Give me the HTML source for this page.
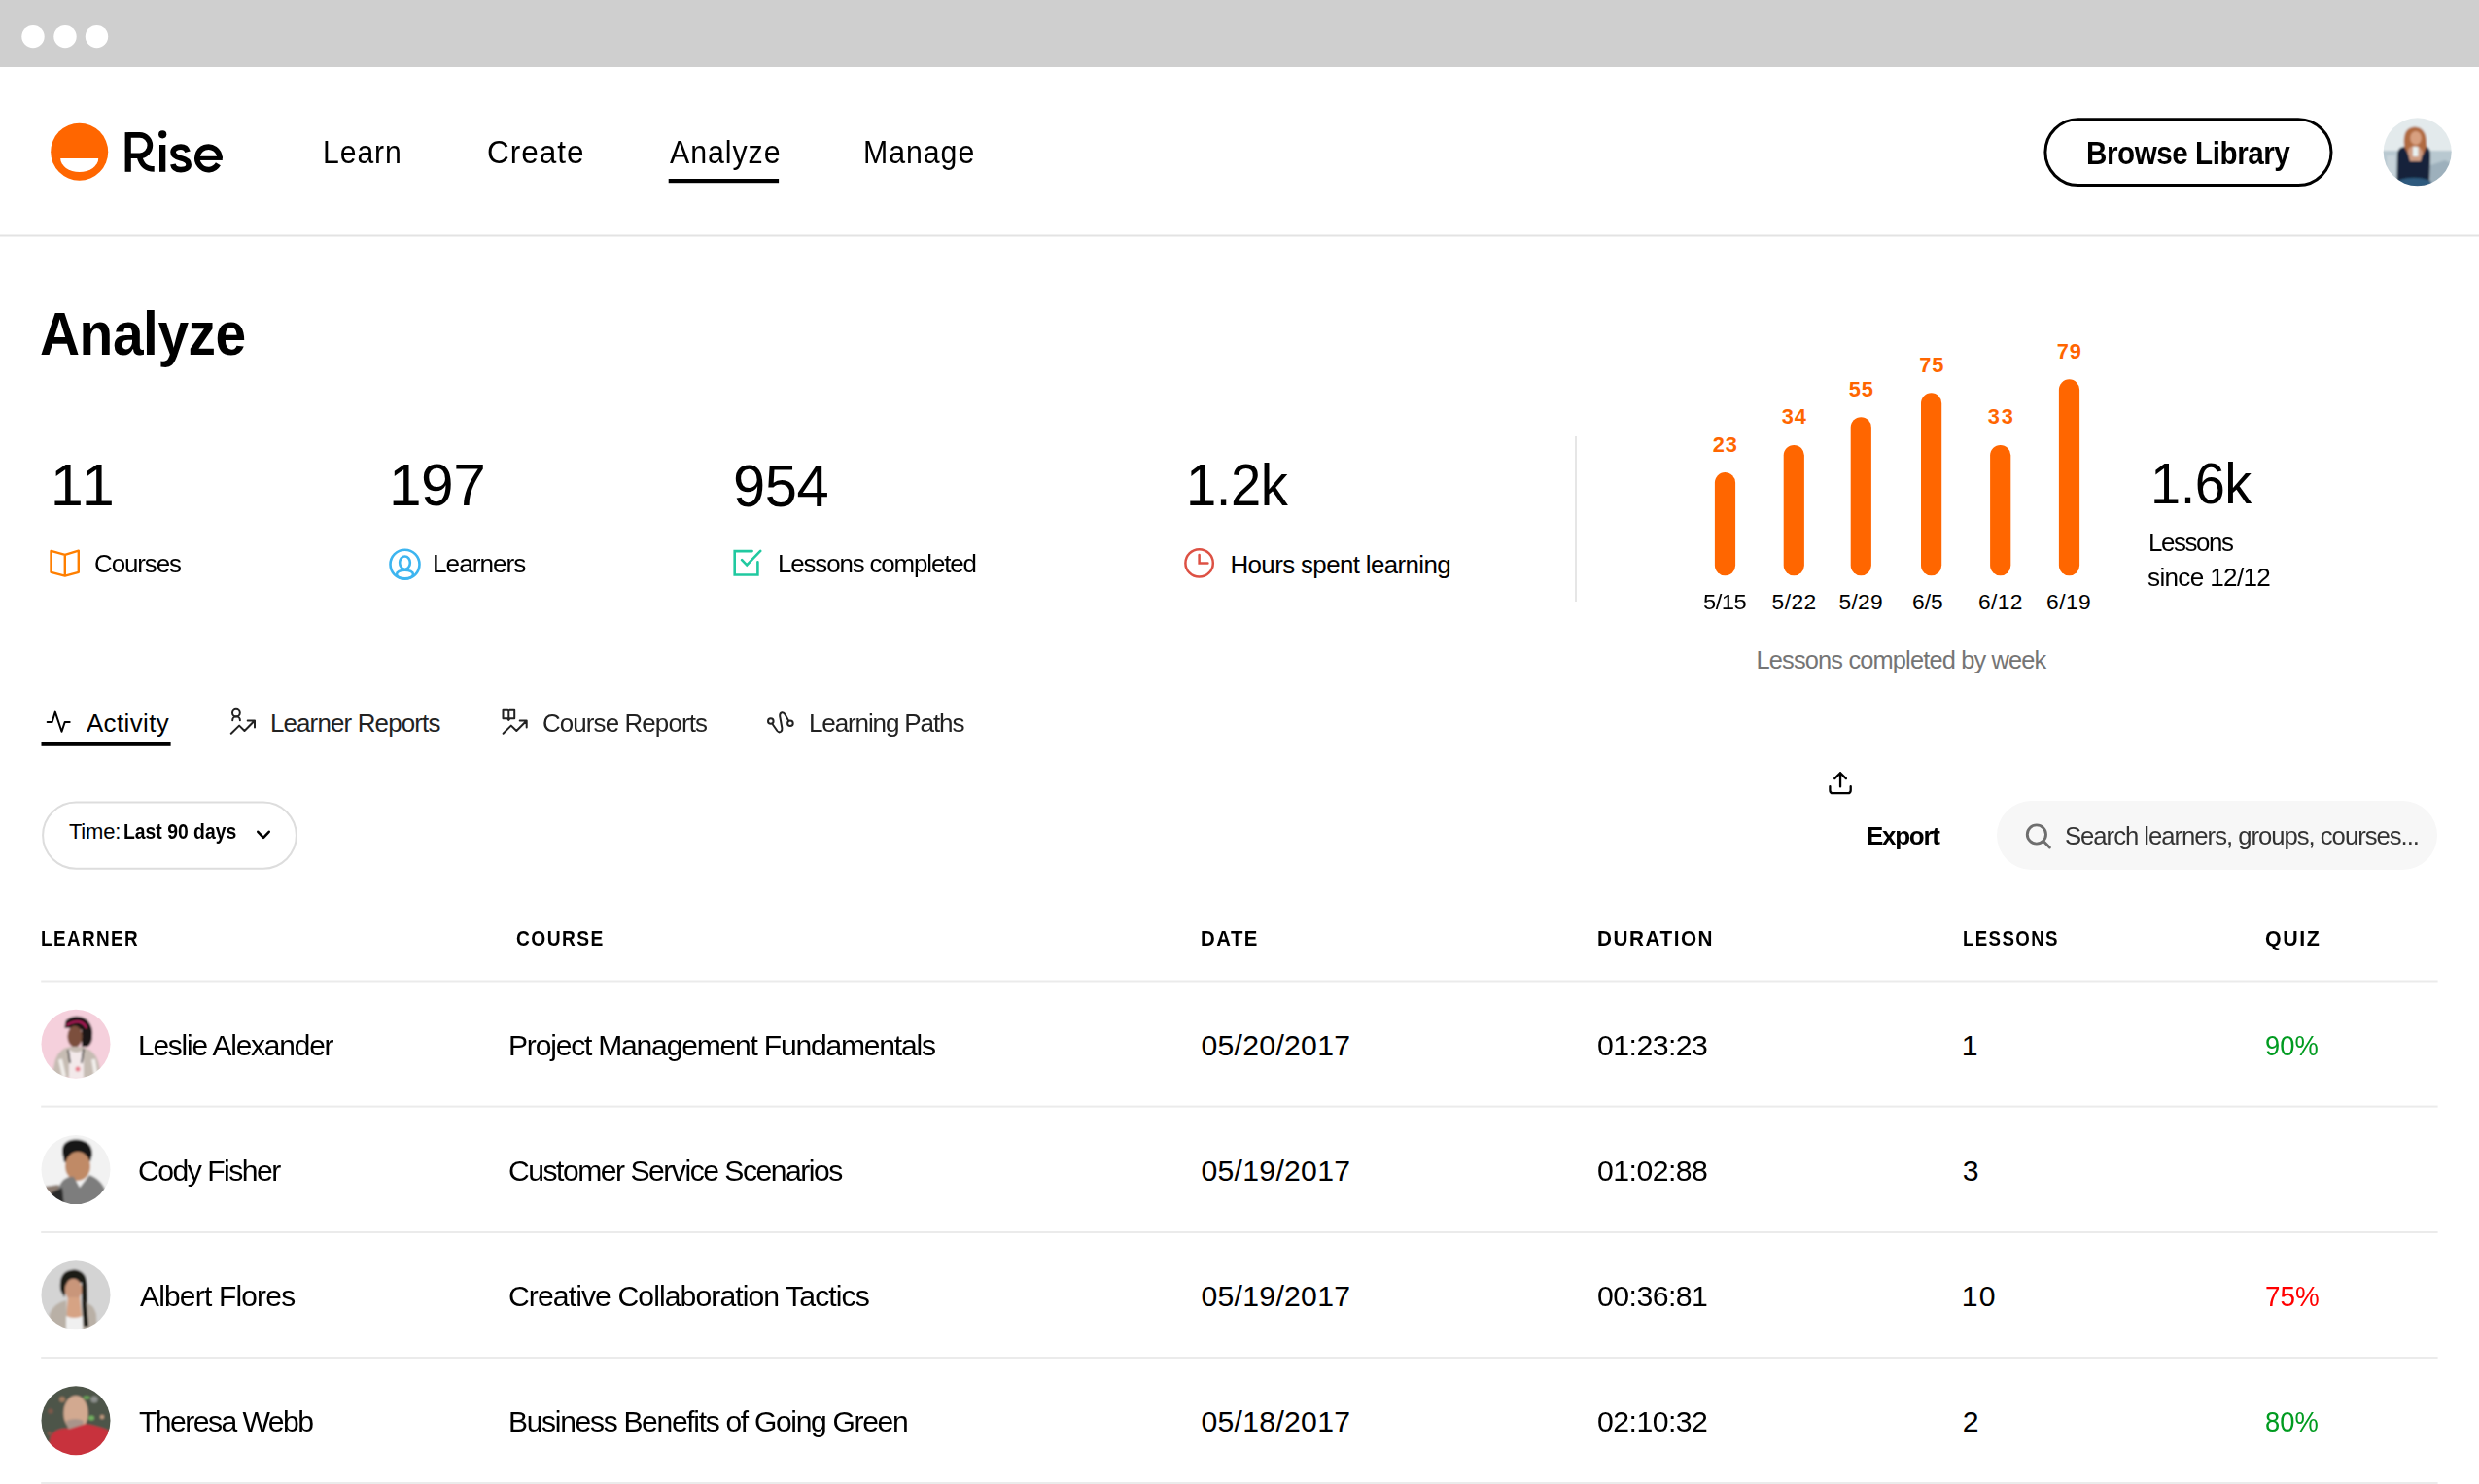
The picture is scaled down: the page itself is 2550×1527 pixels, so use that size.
<!DOCTYPE html>
<html><head><meta charset="utf-8"><title>Rise Analyze</title>
<style>
html,body{margin:0;padding:0;background:#fff;}
body{width:2550px;height:1527px;position:relative;overflow:hidden;font-family:"Liberation Sans",sans-serif;}
.t{position:absolute;white-space:nowrap;line-height:1;margin:0;padding:0;}
.t b{font-weight:700;}
.a{position:absolute;}
</style></head><body>
<svg class="a" style="left:0;top:0" width="2550" height="1527" viewBox="0 0 2550 1527">
<defs>
<filter id="bl" x="-10%" y="-10%" width="120%" height="120%"><feGaussianBlur stdDeviation="0.8"/></filter>
<clipPath id="cA"><circle cx="2486.7" cy="156.3" r="35"/></clipPath>
<clipPath id="c0"><circle cx="78" cy="1074.2" r="35.5"/></clipPath>
<clipPath id="c1"><circle cx="78" cy="1203.6" r="35.5"/></clipPath>
<clipPath id="c2"><circle cx="78" cy="1332.7" r="35.5"/></clipPath>
<clipPath id="c3"><circle cx="78" cy="1461.8" r="35.5"/></clipPath>
</defs>
<!-- browser bar -->
<rect x="0" y="0" width="2550" height="69" fill="#cfcfcf"/>
<circle cx="34" cy="37.6" r="11.7" fill="#fff"/>
<circle cx="67" cy="37.6" r="11.7" fill="#fff"/>
<circle cx="99.5" cy="37.6" r="11.7" fill="#fff"/>
<rect x="0" y="241.5" width="2550" height="2" fill="#e3e3e3"/>
<!-- logo -->
<circle cx="81.7" cy="156.2" r="29.5" fill="#ff6600"/>
<path d="M62.2,163 H101.2 A19.5,14 0 0 1 62.2,163 Z" fill="#fff"/>
<g fill="#000">
 <rect x="128.6" y="136.1" width="6.2" height="40.7"/>
 <rect x="164" y="149" width="6.3" height="27.8"/>
 <circle cx="167.2" cy="138.3" r="4.1"/>
</g>
<g fill="none" stroke="#000" stroke-width="5.7">
 <path d="M131.7,138.95 H143.7 A10.65,10.65 0 0 1 143.7,160.25 H131.7"/>
 <path d="M143.4,160.5 C145.5,170 150,173.95 158.7,173.95"/>
 <path d="M193,156.3 C192,152.5 189,151.1 186,151.1 C181.5,151.1 178.1,153.5 178.1,156.5 C178.1,160.5 182,161.8 186,162.8 C190.5,163.8 194.1,165.5 194.1,169.5 C194.1,173 190.5,174.6 186,174.6 C181.5,174.6 178.5,172.5 177.9,169"/>
 <path d="M226,162.9 A11.55,11.75 0 1 0 224.4,168.8"/>
 <path d="M202.5,162.85 H228.8" stroke-width="4.2"/>
</g>
<!-- nav underline -->
<rect x="687.7" y="184" width="113.4" height="4.2" fill="#000"/>
<!-- browse button -->
<rect x="2103.9" y="122.7" width="294.1" height="67.8" rx="33.9" fill="none" stroke="#000" stroke-width="3"/>
<!-- top avatar -->
<g clip-path="url(#cA)"><g filter="url(#bl)">
 <rect x="2450" y="120" width="75" height="75" fill="#e3eaec"/>
 <rect x="2450" y="155" width="75" height="40" fill="#b8c8d0"/>
 <rect x="2455" y="160" width="9" height="30" fill="#c8d4da"/>
 <path d="M2500,170 L2515,165 L2525,170 V196 H2500 Z" fill="#9db0bc"/>
 <path d="M2473,150 Q2471,131 2484,130.5 Q2496,131 2496,148 L2497,160 L2472,160 Z" fill="#b06a40"/>
 <ellipse cx="2485" cy="142" rx="5.8" ry="7" fill="#d8a080"/>
 <path d="M2465.5,190 L2466,158 Q2467,151 2473,151 L2478,160 L2492,160 L2496,151 Q2500,152 2500,160 L2499,190 Z" fill="#13233a"/>
 <path d="M2477,158 Q2476,151 2483,150 Q2491,150 2492,158 L2490,166 L2479,166 Z" fill="#cf9e84"/>
 <rect x="2482" y="151" width="5.5" height="10" fill="#e8f0f0"/>
 <ellipse cx="2483" cy="188" rx="18" ry="5" fill="#2d5a7e"/>
</g></g>
<!-- stat icons -->
<path d="M52.5,566.9 L66.8,570.8 L80.8,566.7 V588.8 L66.8,592.6 L52.5,588.8 Z M66.8,570.8 V592.6" fill="none" stroke="#ff7f00" stroke-width="2.4" stroke-linejoin="round"/>
<circle cx="416.5" cy="580.7" r="15" fill="none" stroke="#3db5f0" stroke-width="2.6"/>
<ellipse cx="416.5" cy="591.0" rx="8.5" ry="4.3" fill="none" stroke="#3db5f0" stroke-width="2.6"/>
<ellipse cx="416.5" cy="579.1" rx="5.35" ry="6.6" fill="#fff" stroke="#3db5f0" stroke-width="2.6"/>
<path d="M773.6,567.1 H755.7 V591.5 H779.4 V578.3" fill="none" stroke="#20c9a0" stroke-width="2.6" stroke-linecap="round"/>
<path d="M763.1,576.2 L768.2,581.3 L782.2,566.9" fill="none" stroke="#20c9a0" stroke-width="2.6" stroke-linecap="round"/>
<circle cx="1233.6" cy="579.4" r="14.2" fill="none" stroke="#dd5144" stroke-width="2.5"/>
<path d="M1233.6,571 V579.5 H1242.4" fill="none" stroke="#dd5144" stroke-width="2.5" stroke-linecap="round"/>
<rect x="1620" y="449" width="2" height="170" fill="#e6e6e6"/>
<!-- bars -->
<rect x="1763.9" y="486.1" width="21.2" height="106.2" rx="10.6" fill="#ff6600"/>
<rect x="1834.7" y="457.9" width="21.2" height="134.4" rx="10.6" fill="#ff6600"/>
<rect x="1903.7" y="429.2" width="21.2" height="163.1" rx="10.6" fill="#ff6600"/>
<rect x="1976.0" y="404.3" width="21.2" height="188.0" rx="10.6" fill="#ff6600"/>
<rect x="2047.1" y="457.9" width="21.2" height="134.4" rx="10.6" fill="#ff6600"/>
<rect x="2117.9" y="390.3" width="21.2" height="202.0" rx="10.6" fill="#ff6600"/>
<!-- tabs -->
<rect x="42.5" y="764" width="133.1" height="3.8" fill="#000"/>
<path d="M48.7,743 H53.6 L56.8,732.6 L63.5,752.8 L66.7,743 H71.7" fill="none" stroke="#000" stroke-width="2" stroke-linecap="round" stroke-linejoin="round"/>
<g fill="none" stroke="#222" stroke-width="2" stroke-linecap="round" stroke-linejoin="round">
 <circle cx="242.9" cy="733.6" r="3.9"/>
 <path d="M239.2,741.2 A3.85,3.85 0 0 1 246.9,741.2"/>
 <path d="M237.8,754.8 L246.1,746.6 L251.5,752 L261.7,741.8 M254.7,741.5 H262 V748.5"/>
 <path d="M517.5,730.7 H522 L523.3,731.5 L524.6,730.7 H529.2 V739.3 H524.5 L523.3,741 L522.1,739.3 H517.5 Z M523.3,731.5 V739.3"/>
 <path d="M517.6,754.8 L525.8,746.6 L531.3,752 L541.5,741.8 M534.7,741.5 H541.7 V748.5"/>
 <circle cx="792.8" cy="742" r="2.8"/>
 <circle cx="812.9" cy="744.2" r="2.8"/>
 <path d="M794.7,745.2 L799.4,752 Q801.2,754.3 803.3,752.8 Q804.7,751.6 804.4,749.2 L802.2,737 Q801.9,733.6 804.4,733.2 Q806.6,733 807.6,735.3 L810.9,741.3"/>
</g>
<!-- filter row -->
<rect x="44.1" y="825.5" width="260.8" height="68.2" rx="34.1" fill="none" stroke="#dddddd" stroke-width="2"/>
<path d="M265.3,855.8 L271,861.8 L276.7,855.8" fill="none" stroke="#000" stroke-width="2.6" stroke-linecap="round" stroke-linejoin="round"/>
<g fill="none" stroke="#000" stroke-width="2.3" stroke-linecap="round" stroke-linejoin="round">
 <path d="M1893.05,795.2 V809.4 M1887.2,801.1 L1893.05,795.2 L1898.9,801.1"/>
 <path d="M1882.4,809.2 V813.2 Q1882.4,816.2 1885.4,816.2 H1900.7 Q1903.7,816.2 1903.7,813.2 V809.2"/>
</g>
<rect x="2054" y="824" width="453" height="71" rx="35.5" fill="#f7f7f7"/>
<circle cx="2094.9" cy="858.5" r="9.6" fill="none" stroke="#6e6e6e" stroke-width="2.9"/>
<path d="M2102.2,865.8 L2108.4,872" stroke="#6e6e6e" stroke-width="2.9" stroke-linecap="round"/>
<!-- table lines -->
<rect x="42.2" y="1008.5" width="2465.4" height="2" fill="#ebebeb"/>
<rect x="42.2" y="1137.6" width="2465.4" height="2" fill="#ebebeb"/>
<rect x="42.2" y="1267" width="2465.4" height="2" fill="#ebebeb"/>
<rect x="42.2" y="1396" width="2465.4" height="2" fill="#ebebeb"/>
<rect x="42.2" y="1525" width="2465.4" height="2" fill="#ebebeb"/>
<!-- avatars -->
<g clip-path="url(#c0)"><g filter="url(#bl)">
 <rect x="40" y="1036" width="76" height="76" fill="#f5d0dc"/>
 <path d="M66.5,1058 Q66,1047 76,1046 Q84,1045 90,1050 Q96,1057 95,1066 Q95,1074 90,1077 L84,1077 L84,1060 L72,1058 Z" fill="#1e1714"/>
 <ellipse cx="77" cy="1066.5" rx="7.6" ry="11" fill="#7c4f3c"/>
 <path d="M68.5,1055 Q76,1050.5 82,1051.5 Q87,1053 89,1058" fill="none" stroke="#d4186c" stroke-width="1.5"/>
 <path d="M53,1108 L57,1090 Q61,1079 72,1077 L84,1077 Q97,1080 101,1092 L105,1110 Z" fill="#c6bcb3"/>
 <path d="M62,1090 L66,1108 M96,1090 L99,1108" stroke="#f2efec" stroke-width="4"/>
 <path d="M71,1080 L71,1110 L86,1110 L86,1080 Q79,1086 71,1080 Z" fill="#f3e9ea"/>
 <path d="M70,1080 L72,1094 M86,1079 L84,1094" stroke="#222" stroke-width="1.6"/>
 <circle cx="80" cy="1100" r="2.5" fill="#e87a8a"/>
</g></g>
<g clip-path="url(#c1)"><g filter="url(#bl)">
 <rect x="40" y="1166" width="76" height="76" fill="#f2f2f2"/>
 <path d="M46,1221 L60,1219 L64,1228 L64,1242 L44,1242 Z" fill="#8a7a70"/>
 <path d="M64,1186 Q63,1173 78,1172.5 Q95,1173 95,1188 L93,1195 L66,1196 Z" fill="#161616"/>
 <ellipse cx="80" cy="1200" rx="13" ry="15" fill="#c08a66"/>
 <path d="M60,1222 Q66,1209 76,1211 L82,1222 L92,1209 Q106,1214 110,1230 L112,1242 L58,1242 Z" fill="#7d7d7d"/>
 <path d="M53,1227 L64,1222 L66,1242 L50,1242 Z" fill="#2a2a2a"/>
</g></g>
<g clip-path="url(#c2)"><g filter="url(#bl)">
 <rect x="40" y="1295" width="76" height="76" fill="#d4d4d4"/>
 <path d="M62,1327 Q60,1307 76,1306.5 Q89,1307 89.5,1322 L90,1345 L92,1362 L86,1363 L84,1340 L84,1320 L70,1320 L66,1335 Z" fill="#1f1a18"/>
 <ellipse cx="75.5" cy="1327" rx="8.7" ry="11.2" fill="#c9967a"/>
 <path d="M70,1335 L82,1335 L84,1356 L68,1356 Z" fill="#d6a384"/>
 <path d="M49,1372 L51,1352 Q55,1341 68,1338 L70,1372 Z M84,1338 Q97,1342 99,1352 L100,1372 L84,1372 Z" fill="#b9b0a6"/>
 <path d="M68,1354 Q76,1358 85,1354 L85,1372 L68,1372 Z" fill="#f0f0f0"/>
 <path d="M84,1338 L86,1365 L91,1365 L89,1340 Z" fill="#1f1a18"/>
</g></g>
<g clip-path="url(#c3)"><g filter="url(#bl)">
 <rect x="40" y="1424" width="76" height="76" fill="#4e5549"/>
 <circle cx="52" cy="1452" r="2.6" fill="#7d5848"/>
 <circle cx="64" cy="1440" r="3" fill="#a07a60"/>
 <circle cx="97" cy="1440" r="3.6" fill="#8c8f8c"/>
 <ellipse cx="89" cy="1438" rx="3.5" ry="1.8" fill="#6aa858"/>
 <ellipse cx="94" cy="1459" rx="3" ry="2.5" fill="#72b060"/>
 <circle cx="105" cy="1458" r="2.2" fill="#c09a80"/>
 <circle cx="51" cy="1475" r="2" fill="#8a5a48"/>
 <ellipse cx="78" cy="1454" rx="12.6" ry="18" fill="#d2a990"/>
 <path d="M68,1462 Q78,1458 86,1462 L85,1470 L70,1470 Z" fill="#a9948a"/>
 <path d="M48,1500 L52,1478 Q58,1468 72,1470 L88,1465 Q104,1468 112,1472 L116,1500 Z" fill="#c8303c"/>
</g></g>
</svg>
<div class="t" style="left:332.30px;top:140.68px;font-size:32.50px;font-weight:400;color:#000;letter-spacing:1.000px;transform:scaleX(0.9281);transform-origin:0 0;">Learn</div>
<div class="t" style="left:500.50px;top:140.68px;font-size:32.50px;font-weight:400;color:#000;letter-spacing:1.000px;transform:scaleX(0.9704);transform-origin:0 0;">Create</div>
<div class="t" style="left:688.70px;top:140.68px;font-size:32.50px;font-weight:400;color:#000;letter-spacing:1.000px;transform:scaleX(0.9335);transform-origin:0 0;">Analyze</div>
<div class="t" style="left:888.00px;top:140.68px;font-size:32.50px;font-weight:400;color:#000;letter-spacing:1.000px;transform:scaleX(0.9331);transform-origin:0 0;">Manage</div>
<div class="t" style="left:2145.70px;top:141.77px;font-size:32.40px;font-weight:700;color:#000;letter-spacing:-0.500px;transform:scaleX(0.9150);transform-origin:0 0;">Browse Library</div>
<div class="t" style="left:41.10px;top:312.38px;font-size:62.50px;font-weight:700;color:#000;letter-spacing:-0.500px;transform:scaleX(0.9097);transform-origin:0 0;">Analyze</div>
<div class="t" style="left:51.80px;top:469.45px;font-size:61.30px;font-weight:400;color:#000;letter-spacing:2.400px;">11</div>
<div class="t" style="left:400.20px;top:469.45px;font-size:61.30px;font-weight:400;color:#000;letter-spacing:-0.500px;transform:scaleX(0.9857);transform-origin:0 0;">197</div>
<div class="t" style="left:754.30px;top:469.50px;font-size:61.30px;font-weight:400;color:#000;letter-spacing:-0.500px;transform:scaleX(0.9735);transform-origin:0 0;">954</div>
<div class="t" style="left:1219.90px;top:469.20px;font-size:61.30px;font-weight:400;color:#000;letter-spacing:-0.500px;transform:scaleX(0.9167);transform-origin:0 0;">1.2k</div>
<div class="t" style="left:97.20px;top:568.37px;font-size:25.90px;font-weight:400;color:#000;letter-spacing:-1.067px;transform:scaleX(1.0002);transform-origin:0 0;">Courses</div>
<div class="t" style="left:445.30px;top:568.37px;font-size:25.90px;font-weight:400;color:#000;letter-spacing:-0.971px;transform:scaleX(1.0110);transform-origin:0 0;">Learners</div>
<div class="t" style="left:799.90px;top:568.37px;font-size:25.90px;font-weight:400;color:#000;letter-spacing:-1.138px;transform:scaleX(1.0001);transform-origin:0 0;">Lessons completed</div>
<div class="t" style="left:1265.50px;top:568.62px;font-size:25.90px;font-weight:400;color:#000;letter-spacing:-0.621px;transform:scaleX(1.0000);transform-origin:0 0;">Hours spent learning</div>
<div class="t" style="left:1761.75px;top:446.69px;font-size:21.80px;font-weight:700;color:#ff6600;letter-spacing:0.800px;">23</div>
<div class="t" style="left:1752.00px;top:608.30px;font-size:22.80px;font-weight:400;color:#000;letter-spacing:-0.533px;transform:scaleX(1.0448);transform-origin:0 0;">5/15</div>
<div class="t" style="left:1832.75px;top:418.29px;font-size:21.80px;font-weight:700;color:#ff6600;letter-spacing:0.800px;">34</div>
<div class="t" style="left:1822.50px;top:608.30px;font-size:22.80px;font-weight:400;color:#000;letter-spacing:0.467px;">5/22</div>
<div class="t" style="left:1901.75px;top:389.64px;font-size:21.80px;font-weight:700;color:#ff6600;letter-spacing:0.800px;">55</div>
<div class="t" style="left:1891.50px;top:608.30px;font-size:22.80px;font-weight:400;color:#000;letter-spacing:0.267px;">5/29</div>
<div class="t" style="left:1974.25px;top:364.59px;font-size:21.80px;font-weight:700;color:#ff6600;letter-spacing:0.800px;">75</div>
<div class="t" style="left:1967.00px;top:608.30px;font-size:22.80px;font-weight:400;color:#000;letter-spacing:0.000px;">6/5</div>
<div class="t" style="left:2044.75px;top:418.29px;font-size:21.80px;font-weight:700;color:#ff6600;letter-spacing:1.800px;">33</div>
<div class="t" style="left:2035.00px;top:608.30px;font-size:22.80px;font-weight:400;color:#000;letter-spacing:0.333px;">6/12</div>
<div class="t" style="left:2115.75px;top:350.59px;font-size:21.80px;font-weight:700;color:#ff6600;letter-spacing:0.800px;">79</div>
<div class="t" style="left:2105.00px;top:608.30px;font-size:22.80px;font-weight:400;color:#000;letter-spacing:0.467px;">6/19</div>
<div class="t" style="left:1806.50px;top:666.69px;font-size:25.40px;font-weight:400;color:#757575;letter-spacing:-0.842px;transform:scaleX(1.0000);transform-origin:0 0;">Lessons completed by week</div>
<div class="t" style="left:2211.90px;top:468.29px;font-size:59.60px;font-weight:400;color:#000;letter-spacing:-0.500px;transform:scaleX(0.9386);transform-origin:0 0;">1.6k</div>
<div class="t" style="left:2210.10px;top:545.52px;font-size:25.90px;font-weight:400;color:#000;letter-spacing:-1.433px;transform:scaleX(1.0003);transform-origin:0 0;">Lessons</div>
<div class="t" style="left:2209.30px;top:581.67px;font-size:25.90px;font-weight:400;color:#000;letter-spacing:-0.660px;transform:scaleX(1.0081);transform-origin:0 0;">since 12/12</div>
<div class="t" style="left:88.90px;top:731.67px;font-size:25.90px;font-weight:400;color:#000;letter-spacing:0.400px;">Activity</div>
<div class="t" style="left:277.90px;top:731.67px;font-size:25.90px;font-weight:400;color:#222;letter-spacing:-0.829px;transform:scaleX(1.0000);transform-origin:0 0;">Learner Reports</div>
<div class="t" style="left:557.50px;top:731.67px;font-size:25.90px;font-weight:400;color:#222;letter-spacing:-0.877px;transform:scaleX(1.0001);transform-origin:0 0;">Course Reports</div>
<div class="t" style="left:832.20px;top:731.67px;font-size:25.90px;font-weight:400;color:#222;letter-spacing:-1.138px;transform:scaleX(1.0065);transform-origin:0 0;">Learning Paths</div>
<div class="t" style="left:70.90px;top:844.87px;font-size:22.00px;font-weight:400;color:#000;letter-spacing:-0.200px;">Time:</div>
<div class="t" style="left:127.20px;top:844.87px;font-size:22.00px;font-weight:700;color:#000;letter-spacing:0.000px;transform:scaleX(0.8795);transform-origin:0 0;">Last 90 days</div>
<div class="t" style="left:1920.20px;top:848.47px;font-size:25.60px;font-weight:700;color:#000;letter-spacing:-1.240px;transform:scaleX(1.0145);transform-origin:0 0;">Export</div>
<div class="t" style="left:2124.20px;top:848.47px;font-size:25.60px;font-weight:400;color:#333;letter-spacing:-1.012px;transform:scaleX(1.0028);transform-origin:0 0;">Search learners, groups, courses...</div>
<div class="t" style="left:41.90px;top:954.74px;font-size:21.80px;font-weight:700;color:#000;letter-spacing:1.600px;transform:scaleX(0.8674);transform-origin:0 0;">LEARNER</div>
<div class="t" style="left:530.70px;top:954.74px;font-size:21.80px;font-weight:700;color:#000;letter-spacing:1.600px;transform:scaleX(0.8814);transform-origin:0 0;">COURSE</div>
<div class="t" style="left:1234.90px;top:954.74px;font-size:21.80px;font-weight:700;color:#000;letter-spacing:1.600px;transform:scaleX(0.9350);transform-origin:0 0;">DATE</div>
<div class="t" style="left:1643.20px;top:954.74px;font-size:21.80px;font-weight:700;color:#000;letter-spacing:1.600px;transform:scaleX(0.9514);transform-origin:0 0;">DURATION</div>
<div class="t" style="left:2018.60px;top:954.74px;font-size:21.80px;font-weight:700;color:#000;letter-spacing:1.600px;transform:scaleX(0.8574);transform-origin:0 0;">LESSONS</div>
<div class="t" style="left:2329.50px;top:954.74px;font-size:21.80px;font-weight:700;color:#000;letter-spacing:1.600px;transform:scaleX(0.9827);transform-origin:0 0;">QUIZ</div>
<div class="t" style="left:141.60px;top:1061.23px;font-size:30.20px;font-weight:400;color:#000;letter-spacing:-1.187px;transform:scaleX(0.9892);transform-origin:0 0;">Leslie Alexander</div>
<div class="t" style="left:522.50px;top:1061.23px;font-size:30.20px;font-weight:400;color:#000;letter-spacing:-1.213px;transform:scaleX(0.9959);transform-origin:0 0;">Project Management Fundamentals</div>
<div class="t" style="left:1235.50px;top:1061.23px;font-size:30.20px;font-weight:400;color:#000;letter-spacing:0.267px;">05/20/2017</div>
<div class="t" style="left:1643.30px;top:1061.23px;font-size:30.20px;font-weight:400;color:#000;letter-spacing:-0.543px;transform:scaleX(1.0021);transform-origin:0 0;">01:23:23</div>
<div class="t" style="left:2017.80px;top:1061.23px;font-size:30.20px;font-weight:400;color:#000;letter-spacing:0.000px;">1</div>
<div class="t" style="left:2329.80px;top:1061.23px;font-size:30.20px;font-weight:400;color:#009b20;letter-spacing:0.000px;transform:scaleX(0.9049);transform-origin:0 0;">90%</div>
<div class="t" style="left:141.60px;top:1190.23px;font-size:30.20px;font-weight:400;color:#000;letter-spacing:-1.520px;transform:scaleX(0.9987);transform-origin:0 0;">Cody Fisher</div>
<div class="t" style="left:522.50px;top:1190.23px;font-size:30.20px;font-weight:400;color:#000;letter-spacing:-1.496px;transform:scaleX(0.9977);transform-origin:0 0;">Customer Service Scenarios</div>
<div class="t" style="left:1235.50px;top:1190.23px;font-size:30.20px;font-weight:400;color:#000;letter-spacing:0.267px;">05/19/2017</div>
<div class="t" style="left:1643.30px;top:1190.23px;font-size:30.20px;font-weight:400;color:#000;letter-spacing:-0.543px;transform:scaleX(1.0021);transform-origin:0 0;">01:02:88</div>
<div class="t" style="left:2018.80px;top:1190.23px;font-size:30.20px;font-weight:400;color:#000;letter-spacing:0.000px;">3</div>
<div class="t" style="left:143.60px;top:1319.23px;font-size:30.20px;font-weight:400;color:#000;letter-spacing:-0.817px;transform:scaleX(0.9926);transform-origin:0 0;">Albert Flores</div>
<div class="t" style="left:522.50px;top:1319.23px;font-size:30.20px;font-weight:400;color:#000;letter-spacing:-0.938px;transform:scaleX(1.0006);transform-origin:0 0;">Creative Collaboration Tactics</div>
<div class="t" style="left:1235.50px;top:1319.23px;font-size:30.20px;font-weight:400;color:#000;letter-spacing:0.267px;">05/19/2017</div>
<div class="t" style="left:1643.30px;top:1319.23px;font-size:30.20px;font-weight:400;color:#000;letter-spacing:-0.543px;transform:scaleX(1.0021);transform-origin:0 0;">00:36:81</div>
<div class="t" style="left:2017.80px;top:1319.23px;font-size:30.20px;font-weight:400;color:#000;letter-spacing:1.200px;">10</div>
<div class="t" style="left:2329.80px;top:1319.23px;font-size:30.20px;font-weight:400;color:#ff0000;letter-spacing:0.000px;transform:scaleX(0.9222);transform-origin:0 0;">75%</div>
<div class="t" style="left:142.60px;top:1448.23px;font-size:30.20px;font-weight:400;color:#000;letter-spacing:-1.564px;transform:scaleX(0.9990);transform-origin:0 0;">Theresa Webb</div>
<div class="t" style="left:522.50px;top:1448.23px;font-size:30.20px;font-weight:400;color:#000;letter-spacing:-1.329px;transform:scaleX(0.9956);transform-origin:0 0;">Business Benefits of Going Green</div>
<div class="t" style="left:1235.50px;top:1448.23px;font-size:30.20px;font-weight:400;color:#000;letter-spacing:0.267px;">05/18/2017</div>
<div class="t" style="left:1643.30px;top:1448.23px;font-size:30.20px;font-weight:400;color:#000;letter-spacing:-0.543px;transform:scaleX(1.0021);transform-origin:0 0;">02:10:32</div>
<div class="t" style="left:2018.80px;top:1448.23px;font-size:30.20px;font-weight:400;color:#000;letter-spacing:0.000px;">2</div>
<div class="t" style="left:2329.80px;top:1448.23px;font-size:30.20px;font-weight:400;color:#009b20;letter-spacing:0.000px;transform:scaleX(0.9049);transform-origin:0 0;">80%</div>
</body></html>
